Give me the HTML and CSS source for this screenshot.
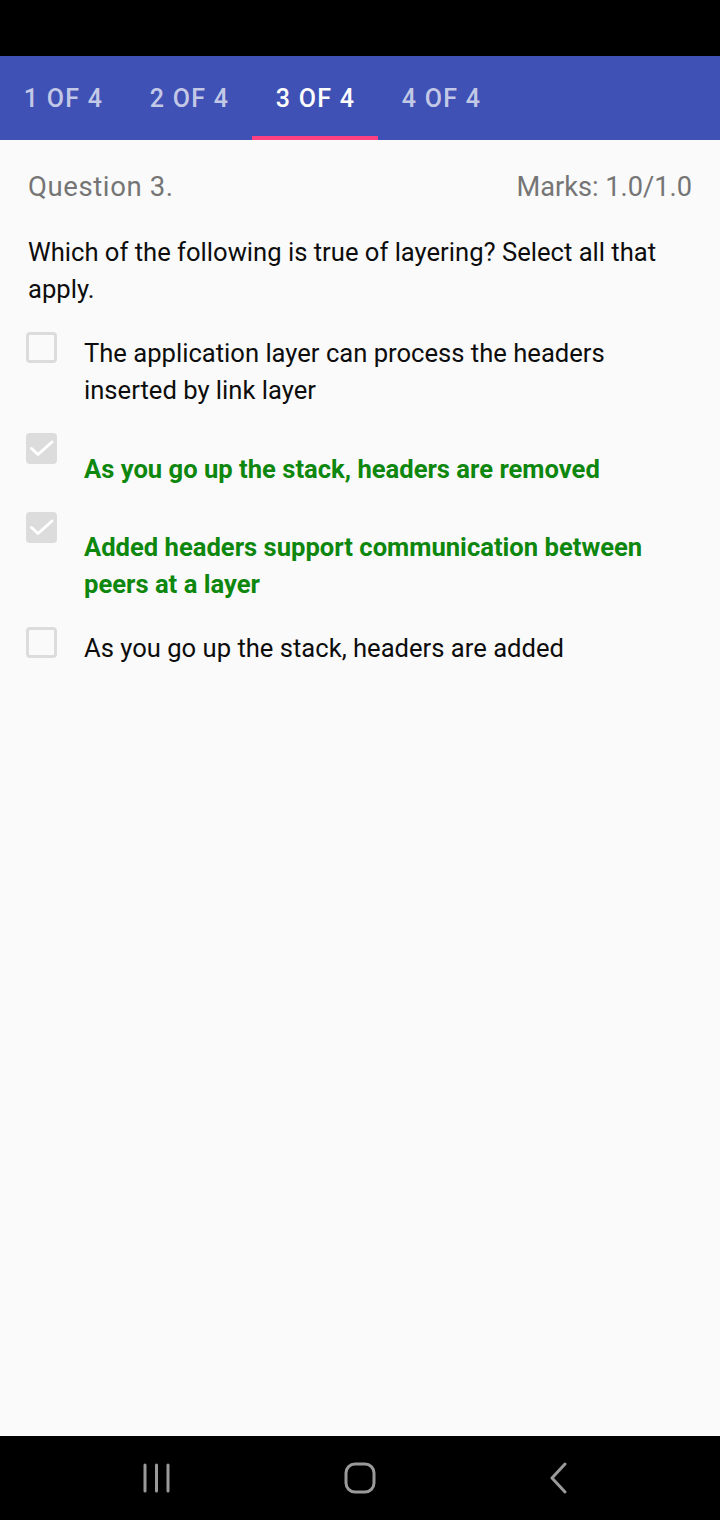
FILE: index.html
```html
<!DOCTYPE html>
<html>
<head>
<meta charset="utf-8">
<link rel="stylesheet" href="styles.css">
</head>
<body>
<div class="screen">
  <div class="status"></div>
  <div class="tabs">
    <div class="tab">1 OF 4</div>
    <div class="tab">2 OF 4</div>
    <div class="tab active">3 OF 4</div>
    <div class="tab">4 OF 4</div>
  </div>
  <div class="content">
    <div class="qhead">
      <span class="qnum">Question 3.</span>
      <span class="marks">Marks: 1.0/1.0</span>
    </div>
    <div class="qtext">Which of the following is true of layering? Select all that apply.</div>
    <div class="options">
      <div class="option">
        <span class="box"></span>
        <span class="label">The application layer can process the headers inserted by link layer</span>
      </div>
      <div class="option correct">
        <span class="box checked"><svg viewBox="0 0 25 25" width="25" height="25"><path d="M2.5 12.5L9 18.5L23 6" fill="none" stroke="#fff" stroke-width="3" stroke-linecap="round" stroke-linejoin="round"/></svg></span>
        <span class="label">As you go up the stack, headers are removed</span>
      </div>
      <div class="option correct">
        <span class="box checked"><svg viewBox="0 0 25 25" width="25" height="25"><path d="M2.5 12.5L9 18.5L23 6" fill="none" stroke="#fff" stroke-width="3" stroke-linecap="round" stroke-linejoin="round"/></svg></span>
        <span class="label">Added headers support communication between peers at a layer</span>
      </div>
      <div class="option">
        <span class="box"></span>
        <span class="label">As you go up the stack, headers are added</span>
      </div>
    </div>
  </div>
  <div class="navbar">
    <svg class="nav-icon" width="30" height="30" viewBox="0 0 30 30"><path d="M3 2v26M14.5 2v26M26 2v26" stroke="#9a9a9a" stroke-width="3" stroke-linecap="round" fill="none"/></svg>
    <svg class="nav-icon" width="32" height="32" viewBox="0 0 32 32"><rect x="2" y="2" width="28" height="28" rx="9" stroke="#9a9a9a" stroke-width="3" fill="none"/></svg>
    <svg class="nav-icon" width="22" height="32" viewBox="0 0 22 32"><path d="M17 2L4 16l13 14" stroke="#9a9a9a" stroke-width="3" stroke-linecap="round" stroke-linejoin="round" fill="none"/></svg>
  </div>
</div>
</body>
</html>
```
FILE: styles.css
```css
html, body {
  margin: 0;
  padding: 0;
}
body {
  font-family: Roboto, "Liberation Sans", sans-serif;
  background: #000;
}
.screen {
  width: 720px;
  height: 1520px;
  display: flex;
  flex-direction: column;
  background: #fafafa;
}
.status {
  height: 56px;
  background: #000;
  flex: none;
}
.tabs {
  height: 84px;
  flex: none;
  background: #3f51b5;
  display: flex;
}
.tab {
  width: 126px;
  box-sizing: border-box;
  display: flex;
  align-items: center;
  justify-content: center;
  font-size: 25px;
  font-weight: 500;
  letter-spacing: 1.3px;
  color: rgba(255, 255, 255, 0.7);
  border-bottom: 4px solid transparent;
  padding-top: 4px;
  padding-left: 1px;
}
.tab.active {
  color: #fff;
  border-bottom-color: #ff4081;
}
.content {
  flex: 1;
  padding: 31px 28px 0 28px;
}
.qhead {
  display: flex;
  justify-content: space-between;
  font-size: 27.5px;
  line-height: 32px;
  color: #757575;
}
.qnum {
  letter-spacing: 0.6px;
}
.marks {
  font-size: 27.2px;
}
.qtext {
  margin-top: 31px;
  font-size: 25.6px;
  line-height: 37px;
  color: #0d0d0d;
}
.options {
  margin-top: 24px;
  display: flex;
  flex-direction: column;
  gap: 24px;
}
.option {
  display: flex;
  align-items: flex-start;
  margin-left: -2px;
}
.box {
  flex: none;
  width: 31px;
  height: 31px;
  box-sizing: border-box;
  border: 3px solid #dcdcdc;
  border-radius: 4px;
  display: flex;
  align-items: center;
  justify-content: center;
}
.box.checked {
  background: #dcdcdc;
}
.box svg {
  display: block;
  overflow: visible;
}
.label {
  margin-left: 27px;
  padding-top: 3px;
  font-size: 25.6px;
  line-height: 37px;
  color: #0d0d0d;
}
.option.correct .label {
  padding-top: 17.5px;
  color: #0e870e;
  font-weight: 700;
}
.navbar {
  height: 84px;
  flex: none;
  background: #000;
  display: flex;
  align-items: center;
  justify-content: space-between;
  padding: 0 150px 0 142px;
}
.nav-icon {
  display: block;
}
```
